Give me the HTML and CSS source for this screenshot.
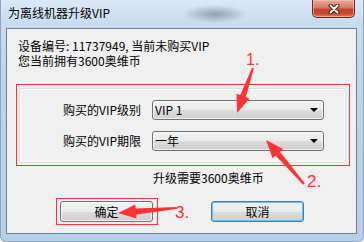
FILE: index.html
```html
<!DOCTYPE html>
<html lang="zh-CN">
<head>
    <meta charset="UTF-8">
    <title>为离线机器升级VIP</title>
    <link rel="stylesheet" href="styles.css">
</head>
<body>
    <div class="window">
        <div class="titlebar">
            <span class="title">为离线机器升级VIP</span>
            <button class="close" type="button" aria-label="关闭">
                <svg width="12" height="10" viewBox="0 0 12 10">
                    <path d="M2.5 1.5 L9.5 8.5 M9.5 1.5 L2.5 8.5" stroke="#3b2420" stroke-width="4" stroke-linecap="round"/>
                    <path d="M2.5 1.5 L9.5 8.5 M9.5 1.5 L2.5 8.5" stroke="#fff" stroke-width="2" stroke-linecap="round"/>
                </svg>
            </button>
        </div>

        <div class="client">
            <p class="info">设备编号: 11737949, 当前未购买VIP<br>您当前拥有3600奥维币</p>

            <div class="mark group-mark">
                <div class="group">
                    <label for="level">购买的VIP级别</label>
                    <div class="combo" id="level"><span>VIP 1</span><i class="caret"></i></div>

                    <label for="term">购买的VIP期限</label>
                    <div class="combo" id="term"><span>一年</span><i class="caret"></i></div>
                </div>
            </div>

            <p class="cost">升级需要3600奥维币</p>

            <div class="actions">
                <div class="mark btn-mark">
                    <button class="btn" type="button">确定</button>
                </div>
                <button class="btn default" type="button">取消</button>
            </div>
        </div>

        <!-- red annotations drawn on top of the dialog -->
        <svg class="notes" width="364" height="242" viewBox="0 0 364 242">
            <polygon points="252.1,67.7 240.2,95 236.4,93.7 237,113 249.6,98.4 245.9,97 253.9,68.3"/>
            <polygon points="304.8,183.3 280,151.7 283.1,149 266,140 272.5,158.2 275.5,155.6 303.2,184.7"/>
            <polygon points="175.9,207 135.7,208.5 135.3,204.5 118,213 136.5,218.4 136.2,214.4 176.1,209"/>
            <text x="246" y="64.5" font-size="16">1.</text>
            <text x="307" y="186.5" font-size="17">2.</text>
            <text x="175" y="217.5" font-size="17">3.</text>
        </svg>
    </div>
</body>
</html>
```

FILE: styles.css
```css
* {
    box-sizing: border-box;
    margin: 0;
    padding: 0;
}

body {
    font-family: "Noto Sans CJK SC", "Liberation Sans", sans-serif;
    font-size: 12px;
    color: #000;
    background-color: #fff;
}

.window {
    position: relative;
    width: 364px;
    height: 242px;
    display: flex;
    flex-direction: column;
    background: linear-gradient(to bottom, #cfe0f2, #bcd3eb 40%, #b7cfe8);
    border: 1px solid #8ea6c0;
    border-top: none;
    border-radius: 0 0 6px 6px;
    overflow: hidden;
}

.titlebar {
    height: 28px;
    flex: none;
    display: flex;
    justify-content: space-between;
    align-items: flex-start;
    padding: 0 8px 0 7px;
    background:
        radial-gradient(ellipse 32px 9px at 214px 14px, rgba(70, 80, 95, 0.45), rgba(70, 80, 95, 0) 100%),
        linear-gradient(to bottom, #dbe8f6, #c6d9ee);
}

.title {
    padding-top: 6px;
    line-height: 14px;
    font-size: 12px;
    color: #000;
}

.close {
    width: 43px;
    height: 18px;
    display: flex;
    align-items: center;
    justify-content: center;
    border: 1px solid #6a2b22;
    border-top: none;
    border-radius: 0 0 5px 5px;
    background: linear-gradient(to bottom, #e6a89b 0%, #d67d6a 45%, #c7432a 55%, #c94a2e 80%, #e07a55 100%);
    box-shadow: inset 0 0 0 1px rgba(255, 210, 200, 0.5);
}

.client {
    flex: 1;
    margin: 0 6px 7px 5px;
    background-color: #f0f0f0;
    border: 1px solid #6f7e8e;
}

.info {
    margin: 9px 0 0 11px;
    line-height: 15px;
}

.mark {
    border: 1px solid #ff3434;
}

.group-mark {
    margin: 16px 6px 0 9px;
    padding: 3px 3px 2px 2px;
}

.group {
    display: grid;
    grid-template-columns: 121px 172px;
    column-gap: 11px;
    row-gap: 11px;
    padding: 11px 0;
    border: 1px solid #d5dfe5;
    border-radius: 3px;
    box-shadow: inset 0 0 0 1px #fff;
}

.group label {
    text-align: right;
    line-height: 20px;
}

.combo {
    height: 20px;
    display: flex;
    align-items: center;
    justify-content: space-between;
    padding: 0 5px 0 2px;
    border: 1px solid #707070;
    border-radius: 3px;
    background: linear-gradient(to bottom, #f2f2f2 0%, #ebebeb 50%, #dddddd 50%, #cfcfcf 100%);
    box-shadow: inset 0 0 0 1px rgba(255, 255, 255, 0.7);
    line-height: 18px;
}

.caret {
    width: 0;
    height: 0;
    border-style: solid;
    border-width: 4px 4px 0;
    border-color: #000 transparent transparent;
}

.cost {
    margin: 5px 0 0 146px;
    line-height: 14px;
}

.actions {
    display: flex;
    align-items: flex-start;
    margin: 13px 0 0 49px;
}

.btn-mark {
    padding: 2px 4px 2px 3px;
}

.btn {
    width: 93px;
    height: 21px;
    font-family: inherit;
    font-size: 12px;
    line-height: 19px;
    color: #000;
    border: 1px solid #707070;
    border-radius: 3px;
    background: linear-gradient(to bottom, #f2f2f2 0%, #ebebeb 50%, #dddddd 50%, #cfcfcf 100%);
    box-shadow: inset 0 0 0 1px rgba(255, 255, 255, 0.7);
}

.btn.default {
    margin: 3px 0 0 53px;
    border-color: #3c7fb1;
    box-shadow: inset 0 0 0 1px #62c6f2;
}

.notes {
    position: absolute;
    left: -1px;
    top: 0;
    pointer-events: none;
    fill: #ff3434;
    font-family: "Liberation Sans", sans-serif;
}
```
